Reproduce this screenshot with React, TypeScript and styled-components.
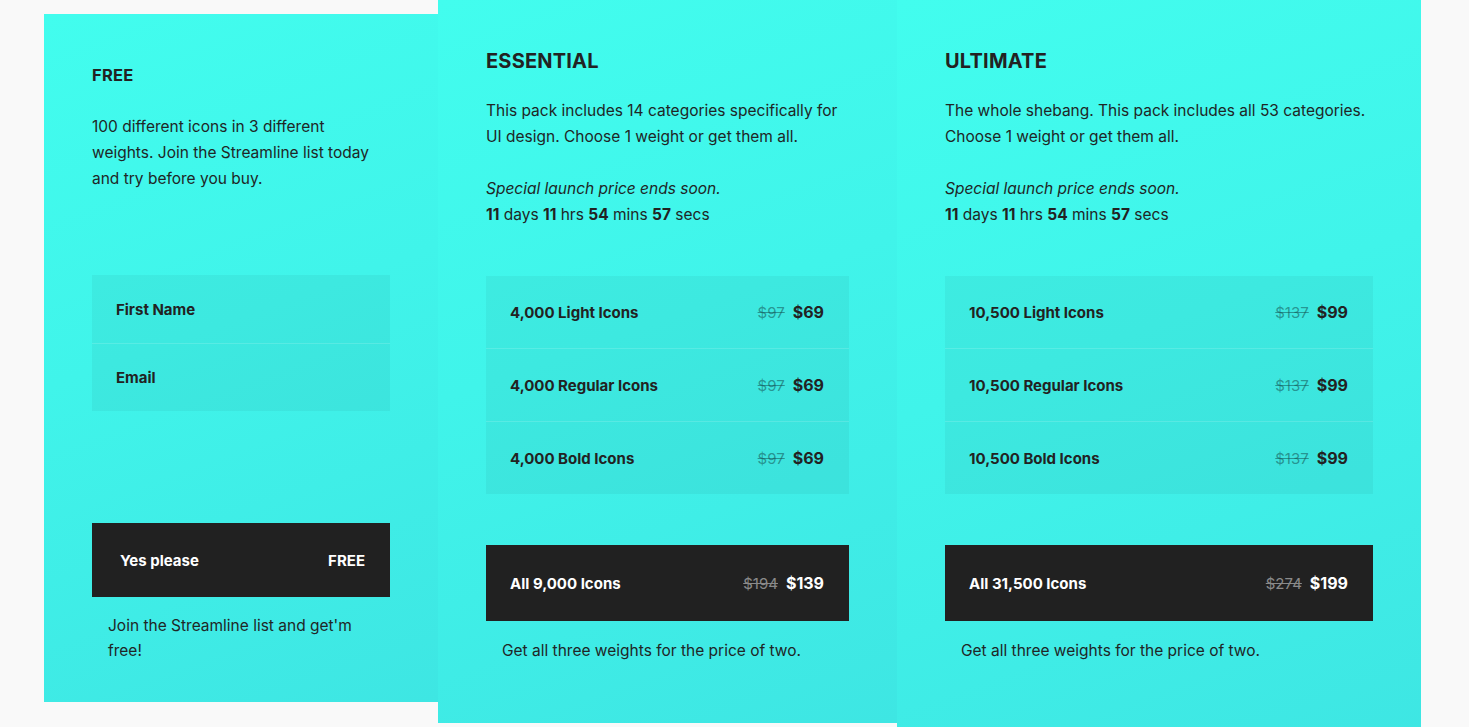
import React from "react";
import styled, { createGlobalStyle } from "styled-components";

const GlobalStyle = createGlobalStyle`
  html, body {
    margin: 0;
    padding: 0;
    background: #f9f9f9;
    overflow: hidden;
  }
  body {
    font-family: Inter, "Noto Sans", "Liberation Sans", sans-serif;
    color: #222;
    -webkit-font-smoothing: antialiased;
  }
`;

const Page = styled.main`
  display: flex;
  align-items: flex-start;
  padding-left: 44px;
  height: 727px;
`;

const Card = styled.section<{ $width: number; $offset: number; $height: number; $padTop: number }>`
  box-sizing: border-box;
  width: ${(p) => p.$width}px;
  height: ${(p) => p.$height}px;
  margin-top: ${(p) => p.$offset}px;
  padding: ${(p) => p.$padTop}px 48px 0;
  flex-shrink: 0;
  display: flex;
  flex-direction: column;
  background: linear-gradient(160deg, #42fdee 0%, #40f4ea 45%, #3ee6e3 100%);
`;

const Title = styled.h2<{ $size: number }>`
  margin: 0;
  font-size: ${(p) => p.$size}px;
  line-height: 28px;
  font-weight: 700;
  letter-spacing: 0.2px;
  color: #222;
`;

const Text = styled.p<{ $gap: number; $measure?: number }>`
  margin: ${(p) => p.$gap}px 0 0;
  max-width: ${(p) => (p.$measure ? `${p.$measure}px` : "none")};
  font-size: 15.5px;
  line-height: 26px;
  font-weight: 400;
  color: #1f2626;
  b {
    font-weight: 700;
    color: #222;
  }
  em {
    font-style: italic;
  }
`;

const Box = styled.div<{ $gap: number }>`
  margin-top: ${(p) => p.$gap}px;
  display: flex;
  flex-direction: column;
  background: rgba(20, 60, 60, 0.055);
`;

const Row = styled.div<{ $height: number }>`
  box-sizing: content-box;
  height: ${(p) => p.$height}px;
  padding: 0 25px 0 24px;
  display: flex;
  align-items: center;
  justify-content: space-between;
  font-size: 15px;
  font-weight: 700;
  color: #222;
  & + & {
    border-top: 1px solid rgba(255, 255, 255, 0.14);
  }
`;

const Prices = styled.span`
  display: flex;
  align-items: baseline;
  gap: 8px;
`;

const OldPrice = styled.s<{ $dark?: boolean }>`
  font-size: 15px;
  font-weight: 400;
  color: ${(p) => (p.$dark ? "#8a8a8a" : "rgba(20, 80, 80, 0.55)")};
`;

const NewPrice = styled.span`
  font-size: 16px;
  font-weight: 700;
`;

const BuyButton = styled.button<{ $gap: number; $height: number; $padLeft: number }>`
  box-sizing: border-box;
  margin-top: ${(p) => p.$gap}px;
  height: ${(p) => p.$height}px;
  width: 100%;
  border: 0;
  padding: 0 25px 0 ${(p) => p.$padLeft}px;
  display: flex;
  align-items: center;
  justify-content: space-between;
  background: #212121;
  color: #fff;
  font-family: inherit;
  font-size: 15px;
  font-weight: 700;
  cursor: pointer;
`;

const Note = styled.p<{ $gap: number }>`
  margin: ${(p) => p.$gap}px 0 0;
  padding: 0 16px;
  font-size: 15.5px;
  line-height: 25px;
  color: #1f2626;
`;

type Tier = {
  title: string;
  width: number;
  desc: string;
  count: string;
  old: string;
  price: string;
  rows: { label: string; old: string; price: string }[];
};

const tiers: Tier[] = [
  {
    title: "ESSENTIAL",
    width: 459,
    desc: "This pack includes 14 categories specifically for UI design. Choose 1 weight or get them all.",
    count: "All 9,000 Icons",
    old: "$194",
    price: "$139",
    rows: [
      { label: "4,000 Light Icons", old: "$97", price: "$69" },
      { label: "4,000 Regular Icons", old: "$97", price: "$69" },
      { label: "4,000 Bold Icons", old: "$97", price: "$69" },
    ],
  },
  {
    title: "ULTIMATE",
    width: 524,
    desc: "The whole shebang. This pack includes all 53 categories. Choose 1 weight or get them all.",
    count: "All 31,500 Icons",
    old: "$274",
    price: "$199",
    rows: [
      { label: "10,500 Light Icons", old: "$137", price: "$99" },
      { label: "10,500 Regular Icons", old: "$137", price: "$99" },
      { label: "10,500 Bold Icons", old: "$137", price: "$99" },
    ],
  },
];

export default function App() {
  return (
    <>
      <GlobalStyle />
      <Page>
        <Card $width={394} $offset={14} $height={688} $padTop={47}>
          <Title $size={16.5}>FREE</Title>
          <Text $gap={25} $measure={290}>
            100 different icons in 3 different weights. Join the Streamline list today and try before you buy.
          </Text>
          <Box $gap={83}>
            <Row $height={68}>First Name</Row>
            <Row $height={67}>Email</Row>
          </Box>
          <BuyButton $gap={112} $height={74} $padLeft={28}>
            <span>Yes please</span>
            <span>FREE</span>
          </BuyButton>
          <Note $gap={16}>Join the Streamline list and get'm free!</Note>
        </Card>
        {tiers.map((t) => (
          <Card key={t.title} $width={t.width} $offset={0} $height={t.title === "ULTIMATE" ? 740 : 723} $padTop={47}>
            <Title $size={20}>{t.title}</Title>
            <Text $gap={23}>{t.desc}</Text>
            <Text $gap={26}>
              <em>Special launch price ends soon.</em>
              <br />
              <b>11</b> days <b>11</b> hrs <b>54</b> mins <b>57</b> secs
            </Text>
            <Box $gap={48}>
              {t.rows.map((r) => (
                <Row key={r.label} $height={72}>
                  <span>{r.label}</span>
                  <Prices>
                    <OldPrice>{r.old}</OldPrice>
                    <NewPrice>{r.price}</NewPrice>
                  </Prices>
                </Row>
              ))}
            </Box>
            <BuyButton $gap={51} $height={76} $padLeft={24}>
              <span>{t.count}</span>
              <Prices>
                <OldPrice $dark>{t.old}</OldPrice>
                <NewPrice>{t.price}</NewPrice>
              </Prices>
            </BuyButton>
            <Note $gap={17}>Get all three weights for the price of two.</Note>
          </Card>
        ))}
      </Page>
    </>
  );
}
